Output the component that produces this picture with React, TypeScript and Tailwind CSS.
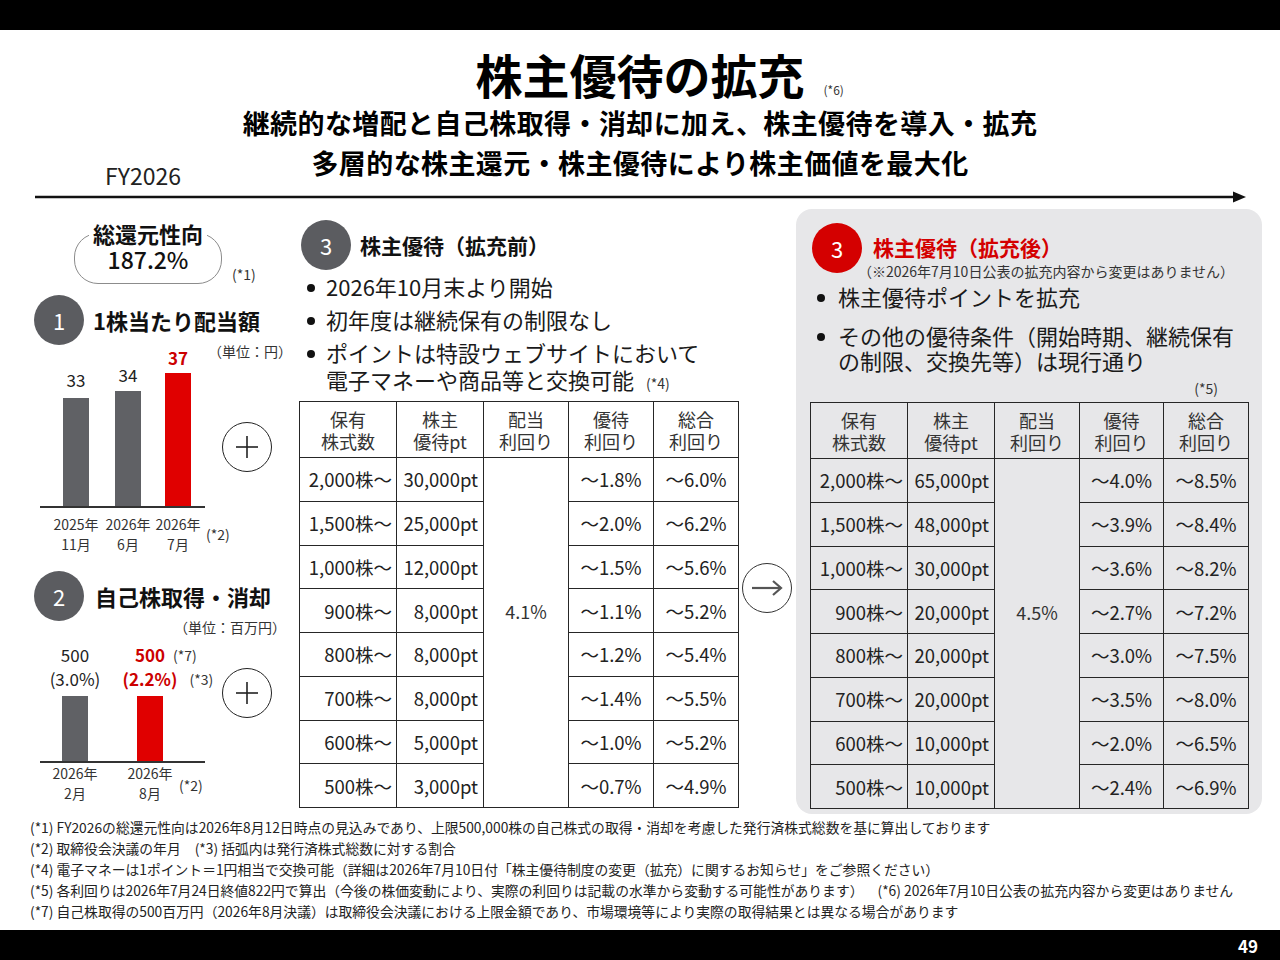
import React from "react";

type Row = [string, string, string, string];

const beforeRows: Row[] = [
  ["2,000株〜", "30,000pt", "〜1.8%", "〜6.0%"],
  ["1,500株〜", "25,000pt", "〜2.0%", "〜6.2%"],
  ["1,000株〜", "12,000pt", "〜1.5%", "〜5.6%"],
  ["900株〜", "8,000pt", "〜1.1%", "〜5.2%"],
  ["800株〜", "8,000pt", "〜1.2%", "〜5.4%"],
  ["700株〜", "8,000pt", "〜1.4%", "〜5.5%"],
  ["600株〜", "5,000pt", "〜1.0%", "〜5.2%"],
  ["500株〜", "3,000pt", "〜0.7%", "〜4.9%"],
];

const afterRows: Row[] = [
  ["2,000株〜", "65,000pt", "〜4.0%", "〜8.5%"],
  ["1,500株〜", "48,000pt", "〜3.9%", "〜8.4%"],
  ["1,000株〜", "30,000pt", "〜3.6%", "〜8.2%"],
  ["900株〜", "20,000pt", "〜2.7%", "〜7.2%"],
  ["800株〜", "20,000pt", "〜3.0%", "〜7.5%"],
  ["700株〜", "20,000pt", "〜3.5%", "〜8.0%"],
  ["600株〜", "10,000pt", "〜2.0%", "〜6.5%"],
  ["500株〜", "10,000pt", "〜2.4%", "〜6.9%"],
];

const cell = "border-[1.5px] border-[#262626]";
const th = cell + " font-normal text-[18px] leading-[22px] text-[#333] align-middle text-center";
const td = cell + " text-[18.5px] leading-[24px] whitespace-nowrap align-middle";

function YieldTable({ rows, mid, colClasses, widthClass }: { rows: Row[]; mid: string; colClasses: string[]; widthClass: string }) {
  return (
    <table className={"border-collapse table-fixed text-[#222] " + widthClass}>
      <colgroup>
        {colClasses.map((c, i) => (
          <col key={i} className={c} />
        ))}
      </colgroup>
      <thead>
        <tr className="h-[56px]">
          <th className={th}>保有<br />株式数</th>
          <th className={th}>株主<br />優待pt</th>
          <th className={th}>配当<br />利回り</th>
          <th className={th}>優待<br />利回り</th>
          <th className={th}>総合<br />利回り</th>
        </tr>
      </thead>
      <tbody>
        {rows.map((r, i) => (
          <tr key={i} className="h-[43.75px]">
            <td className={td + " text-right pr-[4px]"}>{r[0]}</td>
            <td className={td + " text-right pr-[5px]"}>{r[1]}</td>
            {i === 0 && (
              <td
                rowSpan={8}
                className={cell + " text-[18px] leading-[24px] text-center text-[#333] !align-top pt-[141px]"}
              >
                {mid}
              </td>
            )}
            <td className={td + " text-center"}>{r[2]}</td>
            <td className={td + " text-center"}>{r[3]}</td>
          </tr>
        ))}
      </tbody>
    </table>
  );
}

function NumCircle({ n, red }: { n: string; red?: boolean }) {
  return (
    <div
      className={
        "w-[50px] h-[50px] shrink-0 rounded-full flex items-center justify-center text-white text-[22px] leading-none " +
        (red ? "bg-[#d40000]" : "bg-[#5b5c60]")
      }
    >
      {n}
    </div>
  );
}

function PlusCircle() {
  return (
    <div className="w-[50px] h-[50px] rounded-full border-[1.5px] border-[#222] flex items-center justify-center">
      <svg width="26" height="26" viewBox="0 0 26 26">
        <line x1="13" y1="2" x2="13" y2="24" stroke="#222" strokeWidth="1.6" />
        <line x1="2" y1="13" x2="24" y2="13" stroke="#222" strokeWidth="1.6" />
      </svg>
    </div>
  );
}

function ArrowCircle() {
  return (
    <div className="w-[50px] h-[50px] rounded-full border-[1.5px] border-[#333] flex items-center justify-center">
      <svg width="34" height="20" viewBox="0 0 34 20">
        <line x1="2" y1="10" x2="31" y2="10" stroke="#555" strokeWidth="2.2" />
        <polyline points="23,3 31,10 23,17" fill="none" stroke="#555" strokeWidth="2.2" />
      </svg>
    </div>
  );
}

function Dot({ mt }: { mt: string }) {
  return <span className={"block w-[8px] h-[8px] rounded-full bg-[#111] " + mt} />;
}

export default function App() {
  return (
    <div className="w-[1280px] h-[960px] bg-white flex flex-col font-['Noto_Sans_CJK_JP',sans-serif] text-[#1a1a1a] overflow-hidden">
      <div className="h-[30px] bg-black shrink-0" />

      {/* Header */}
      <div className="flex justify-center mt-[19px] h-[50px]">
        <span className="relative text-[47px] leading-[50px] font-bold text-black">
          株主優待の拡充
          <span className="absolute left-[calc(100%+19px)] top-[34px] text-[12px] leading-[14px] font-normal text-[#333] whitespace-nowrap">
            (*6)
          </span>
        </span>
      </div>
      <div className="mt-[4px] text-center text-[27px] leading-[40px] font-bold text-black tracking-[0.4px]">
        継続的な増配と自己株取得・消却に加え、株主優待を導入・拡充
      </div>
      <div className="grid grid-cols-[1fr_auto_1fr] h-[40px]">
        <div className="pl-[105px] pt-[20px] text-[23px] leading-[24px] text-[#222]">FY2026</div>
        <div className="text-[27px] leading-[40px] font-bold text-black tracking-[0.4px]">
          多層的な株主還元・株主優待により株主価値を最大化
        </div>
        <div />
      </div>
      <div className="mt-[8px] ml-[35px]">
        <svg width="1212" height="12" viewBox="0 0 1212 12" className="block">
          <line x1="0" y1="6" x2="1200" y2="6" stroke="#111" strokeWidth="2.5" />
          <polygon points="1198,0.5 1211,6 1198,11.5" fill="#111" />
        </svg>
      </div>

      {/* Body */}
      <div className="mt-[6px] h-[605px] shrink-0 flex pl-[30px]">
        {/* Left column */}
        <div className="w-[269px] shrink-0 flex flex-col">
          <div className="flex items-end mt-[11px]">
            <fieldset className="ml-[44px] w-[148px] border-[1.5px] border-[#8c8c8c] rounded-[24px] text-center pb-[11px]">
              <legend className="mx-auto px-[4px] text-[22px] leading-[26px] font-bold text-[#111]">総還元性向</legend>
              <div className="text-[23px] leading-[26px] font-medium text-[#111]">187.2%</div>
            </fieldset>
            <span className="ml-[10px] mb-[1px] text-[14px] leading-[18px] text-[#333]">(*1)</span>
          </div>

          <div className="flex items-center mt-[11px] ml-[4px]">
            <NumCircle n="1" />
            <span className="ml-[9px] text-[22px] leading-[28px] font-bold text-[#111]">1株当たり配当額</span>
          </div>

          <div className="flex">
            <div className="w-[165px] ml-[10px] shrink-0">
              <div className="h-[161px] flex items-end pl-[10px]">
                <div className="w-[52px] shrink-0 flex flex-col items-center">
                  <span className="text-[17px] leading-[20px] mb-[8px] text-[#222]">33</span>
                  <div className="w-[26px] h-[108px] bg-[#606165]" />
                </div>
                <div className="w-[52px] shrink-0 flex flex-col items-center">
                  <span className="text-[17px] leading-[20px] mb-[6px] text-[#222]">34</span>
                  <div className="w-[26px] h-[115px] bg-[#606165]" />
                </div>
                <div className="w-[48px] shrink-0 flex flex-col items-center">
                  <span className="text-[17px] leading-[20px] mb-[5px] font-bold text-[#cc0000]">37</span>
                  <div className="w-[26px] h-[133px] bg-[#e00000]" />
                </div>
              </div>
              <div className="h-[2px] bg-[#333]" />
              <div className="flex items-center mt-[6px] pl-[10px] text-[14px] leading-[20px] text-[#333]">
                <div className="w-[52px] shrink-0 text-center">2025年<br />11月</div>
                <div className="w-[52px] shrink-0 text-center">2026年<br />6月</div>
                <div className="w-[48px] shrink-0 text-center">2026年<br />7月</div>
                <div className="ml-[4px] shrink-0 whitespace-nowrap">(*2)</div>
              </div>
            </div>
            <div className="w-[94px] min-w-0 shrink-0 flex flex-col">
              <span className="self-end mt-[-3px] pr-[7px] text-[14px] leading-[18px] text-[#333] whitespace-nowrap">（単位：円）</span>
              <div className="mt-[62px] ml-[17px]">
                <PlusCircle />
              </div>
            </div>
          </div>

          <div className="flex items-center mt-[17px] ml-[4px]">
            <NumCircle n="2" />
            <span className="ml-[11px] text-[22px] leading-[28px] font-bold text-[#111]">自己株取得・消却</span>
          </div>

          <div className="flex">
            <div className="w-[165px] ml-[10px] shrink-0">
              <div className="h-[140px] flex items-end">
                <div className="w-[70px] shrink-0 flex flex-col items-center">
                  <div className="text-[17px] leading-[24px] text-center text-[#222] mb-[5px]">
                    500<br />(3.0%)
                  </div>
                  <div className="w-[26px] h-[65px] bg-[#606165]" />
                </div>
                <div className="w-[70px] ml-[5px] shrink-0 flex flex-col items-center">
                  <div className="text-[17px] leading-[24px] text-center font-bold text-[#cc0000] mb-[5px] flex flex-col items-center">
                    <span className="relative">
                      500
                      <span className="absolute left-[calc(100%+8px)] top-0 text-[14px] font-normal text-[#333] whitespace-nowrap">(*7)</span>
                    </span>
                    <span className="relative">
                      (2.2%)
                      <span className="absolute left-[calc(100%+12px)] top-0 text-[14px] font-normal text-[#333] whitespace-nowrap">(*3)</span>
                    </span>
                  </div>
                  <div className="w-[26px] h-[65px] bg-[#e00000]" />
                </div>
              </div>
              <div className="h-[2px] bg-[#333]" />
              <div className="flex items-center text-[14px] leading-[20px] text-[#333]">
                <div className="w-[70px] shrink-0 text-center">2026年<br />2月</div>
                <div className="w-[70px] ml-[5px] shrink-0 text-center">2026年<br />8月</div>
                <div className="ml-[-6px] mt-[3px] shrink-0 whitespace-nowrap">(*2)</div>
              </div>
            </div>
            <div className="w-[94px] min-w-0 shrink-0 flex flex-col">
              <span className="self-end mt-[-3px] pr-[13px] text-[14px] leading-[18px] text-[#333] whitespace-nowrap">（単位：百万円）</span>
              <div className="mt-[32px] ml-[17px]">
                <PlusCircle />
              </div>
            </div>
          </div>
        </div>

        {/* Middle column */}
        <div className="w-[439px] shrink-0 flex flex-col">
          <div className="flex items-center mt-[11px] ml-[2px]">
            <NumCircle n="3" />
            <span className="ml-[9px] text-[21px] leading-[28px] font-bold text-[#111]">株主優待（拡充前）</span>
          </div>
          <ul className="mt-[3px] flex flex-col gap-[6px] text-[22px] leading-[27px] text-[#1a1a1a]">
            <li className="flex">
              <span className="w-[27px] shrink-0 pl-[8px]"><Dot mt="mt-[11px]" /></span>
              <span>2026年10月末より開始</span>
            </li>
            <li className="flex">
              <span className="w-[27px] shrink-0 pl-[8px]"><Dot mt="mt-[11px]" /></span>
              <span>初年度は継続保有の制限なし</span>
            </li>
            <li className="flex">
              <span className="w-[27px] shrink-0 pl-[8px]"><Dot mt="mt-[11px]" /></span>
              <span>
                ポイントは特設ウェブサイトにおいて
                <br />
                電子マネーや商品等と交換可能
                <span className="ml-[12px] text-[14px] text-[#333]">(*4)</span>
              </span>
            </li>
          </ul>
          <div className="mt-[4px]">
            <YieldTable
              rows={beforeRows}
              mid="4.1%"
              widthClass="w-[439px]"
              colClasses={["w-[97px]", "w-[87px]", "w-[85px]", "w-[85px]", "w-[85px]"]}
            />
          </div>
        </div>

        {/* Arrow column */}
        <div className="w-[58px] shrink-0 flex flex-col">
          <div className="mt-[354px] ml-[4px]">
            <ArrowCircle />
          </div>
        </div>

        {/* Right panel */}
        <div className="w-[466px] shrink-0 bg-[#e7e7e9] rounded-[16px] flex flex-col pt-[14px] px-[14px]">
          <div className="flex items-start">
            <div className="ml-[2px]">
              <NumCircle n="3" red />
            </div>
            <div className="ml-[11px] pt-[10px] flex flex-col">
              <span className="text-[21px] leading-[28px] font-bold text-[#d40000]">株主優待（拡充後）</span>
              <span className="mt-[1px] -ml-[15px] text-[14px] leading-[18px] text-[#333] whitespace-nowrap">
                （※2026年7月10日公表の拡充内容から変更はありません）
              </span>
            </div>
          </div>
          <ul className="mt-[4px] flex flex-col gap-[14px] text-[22px] leading-[25px] text-[#1a1a1a]">
            <li className="flex">
              <span className="w-[28px] shrink-0 pl-[7px]"><Dot mt="mt-[10px]" /></span>
              <span>株主優待ポイントを拡充</span>
            </li>
            <li className="flex">
              <span className="w-[28px] shrink-0 pl-[7px]"><Dot mt="mt-[10px]" /></span>
              <span>
                その他の優待条件（開始時期、継続保有
                <br />
                の制限、交換先等）は現行通り
              </span>
            </li>
          </ul>
          <span className="self-end mr-[30px] mt-[6px] text-[14px] leading-[18px] text-[#333]">(*5)</span>
          <div className="mt-[5px]">
            <YieldTable
              rows={afterRows}
              mid="4.5%"
              widthClass="w-[438px]"
              colClasses={["w-[97px]", "w-[87px]", "w-[85px]", "w-[84px]", "w-[85px]"]}
            />
          </div>
        </div>
      </div>

      {/* Footnotes */}
      <div className="flex-1 mt-[3px] pl-[30px] text-[13.8px] leading-[21px] text-[#222] whitespace-nowrap">
        <div>(*1) FY2026の総還元性向は2026年8月12日時点の見込みであり、上限500,000株の自己株式の取得・消却を考慮した発行済株式総数を基に算出しております</div>
        <div>(*2) 取締役会決議の年月<span className="ml-[14px]">(*3) 括弧内は発行済株式総数に対する割合</span></div>
        <div>(*4) 電子マネーは1ポイント＝1円相当で交換可能（詳細は2026年7月10日付「株主優待制度の変更（拡充）に関するお知らせ」をご参照ください）</div>
        <div>
          (*5) 各利回りは2026年7月24日終値822円で算出（今後の株価変動により、実際の利回りは記載の水準から変動する可能性があります）
          <span className="ml-[14px]">(*6) 2026年7月10日公表の拡充内容から変更はありません</span>
        </div>
        <div>(*7) 自己株取得の500百万円（2026年8月決議）は取締役会決議における上限金額であり、市場環境等により実際の取得結果とは異なる場合があります</div>
      </div>

      <div className="h-[30px] shrink-0 bg-black flex items-center justify-end pr-[22px]">
        <span className="text-white font-bold text-[17px] leading-none">49</span>
      </div>
    </div>
  );
}
